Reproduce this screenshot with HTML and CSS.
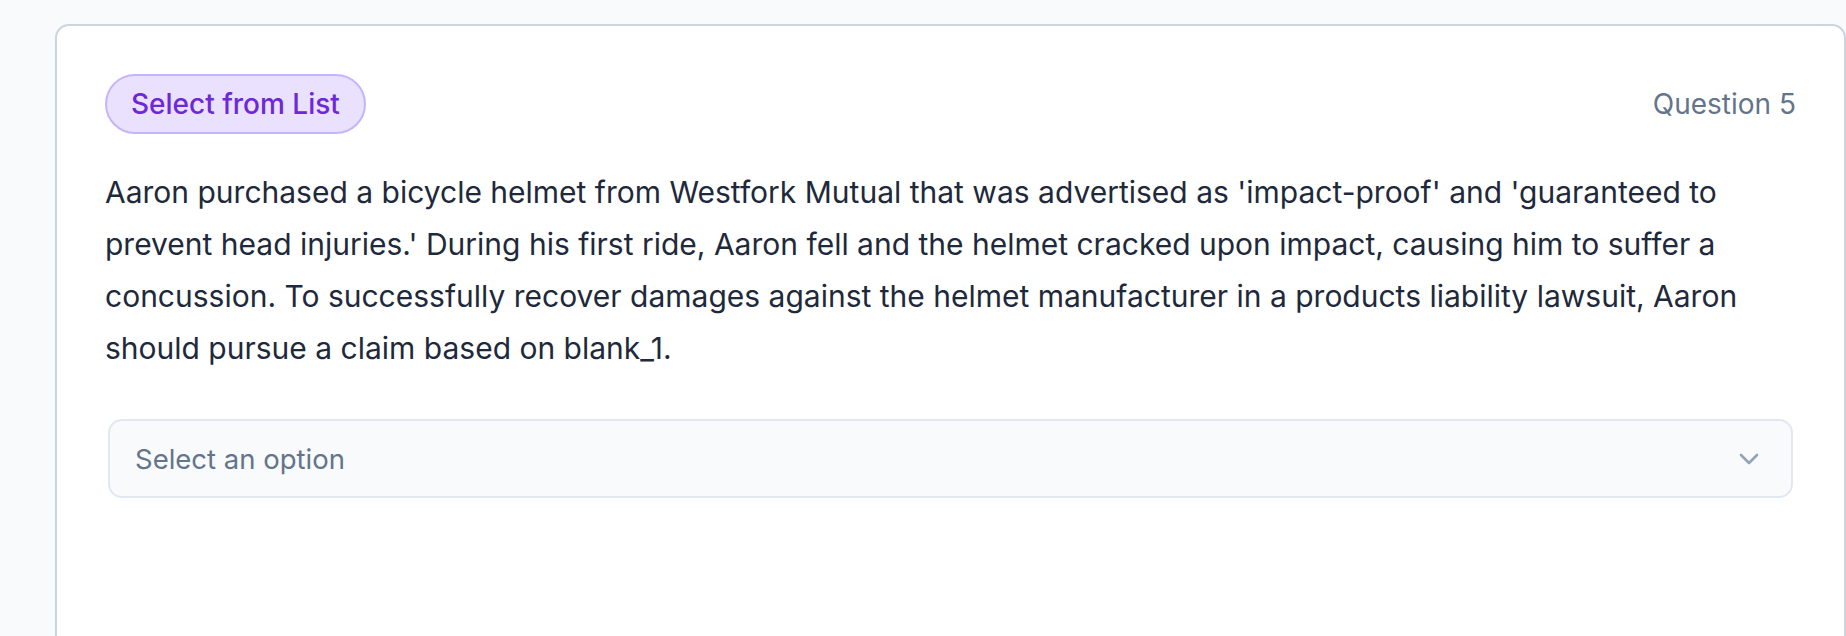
FILE: index.html
```html
<!DOCTYPE html>
<html lang="en">
<head>
<meta charset="utf-8">
<title>Question 5</title>
<link rel="stylesheet" href="styles.css">
</head>
<body>
<main class="page">
  <section class="card">
    <header class="card-head">
      <span class="pill">Select from List</span>
      <span class="qnum">Question 5</span>
    </header>
    <p class="prompt">Aaron purchased a bicycle helmet from Westfork Mutual that was advertised as 'impact-proof' and 'guaranteed to prevent head injuries.' During his first ride, Aaron fell and the helmet cracked upon impact, causing him to suffer a concussion. To successfully recover damages against the helmet manufacturer in a products liability lawsuit, Aaron should pursue a claim based on blank_1.</p>
    <div class="select-wrap">
      <div class="select">
        <span class="placeholder">Select an option</span>
        <svg class="chev" width="20" height="12" viewBox="0 0 20 12" aria-hidden="true"><path d="M2 2l8 8 8-8" fill="none" stroke="#94a3b8" stroke-width="2.6" stroke-linecap="round" stroke-linejoin="round"/></svg>
      </div>
    </div>
  </section>
</main>
</body>
</html>
```
FILE: styles.css
```css
html, body {
  margin: 0;
  padding: 0;
  background: #f8fafc;
  font-family: Inter, "Noto Sans", sans-serif;
  height: 100%;
  overflow: hidden;
}
.page {
  padding: 24px 0 0 55px;
}
.card {
  background: #ffffff;
  border: 2px solid #cbd5e1;
  border-radius: 14px;
  padding: 48px 48px 0 48px;
  min-height: 700px;
  box-sizing: border-box;
}
.card-head {
  display: flex;
  justify-content: space-between;
  align-items: center;
}
.pill {
  display: inline-block;
  background: #e9e1fd;
  border: 2px solid #c4b5fd;
  color: #6d28d9;
  border-radius: 999px;
  font-size: 28px;
  line-height: 40px;
  padding: 8px 24px;
  font-weight: 500;
}
.qnum {
  color: #64748b;
  font-size: 28px;
  line-height: 40px;
}
.prompt {
  margin: 32px 0 0 0;
  color: #1e293b;
  font-size: 30px;
  line-height: 52px;
}
.select-wrap {
  padding: 0 3px;
  margin-top: 45px;
}
.select {
  display: flex;
  align-items: center;
  justify-content: space-between;
  height: 79px;
  box-sizing: border-box;
  border: 2px solid #e2e8f0;
  border-radius: 14px;
  background: #f8fafc;
  padding: 0 32px 0 25px;
}
.placeholder {
  color: #64748b;
  font-size: 27.5px;
}
.chev {
  display: block;
}
```
